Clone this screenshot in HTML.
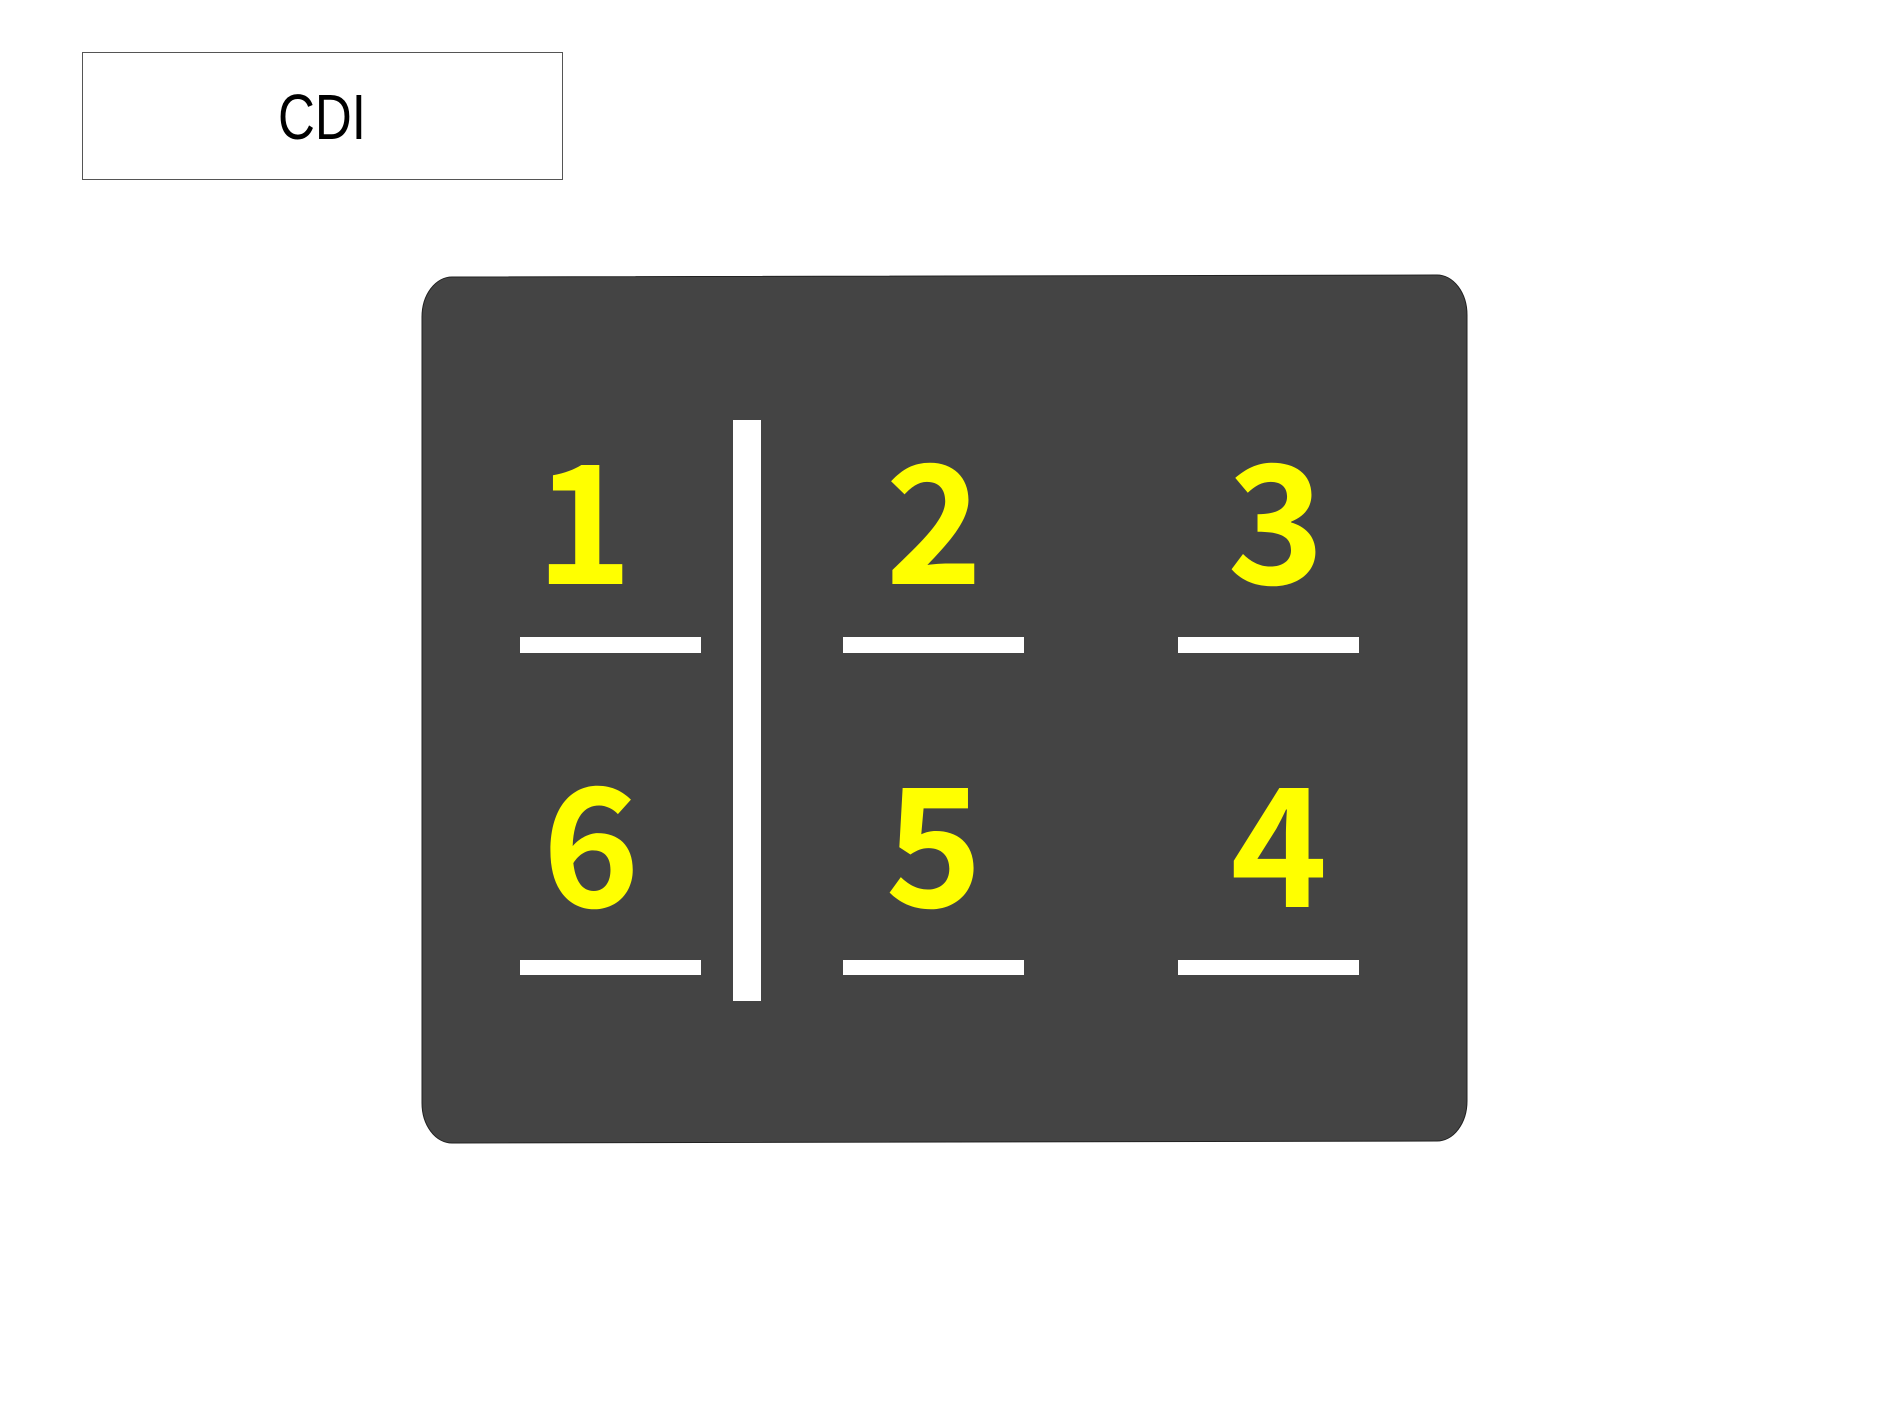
<!DOCTYPE html>
<html><head><meta charset="utf-8"><style>
html,body{margin:0;padding:0;background:#fff;width:1890px;height:1417px;overflow:hidden}
svg{display:block}
</style></head><body>
<svg width="1890" height="1417" viewBox="0 0 1890 1417" xmlns="http://www.w3.org/2000/svg">
<rect x="82.5" y="52.5" width="480" height="127" fill="#fff" stroke="#555" stroke-width="1"/>
<text x="322" y="139" font-family="Liberation Sans Narrow, Liberation Sans, sans-serif" font-size="64" text-anchor="middle" textLength="88" lengthAdjust="spacingAndGlyphs" fill="#000">CDI</text>
<path d="M452 277 L1437 275 A30 40 0 0 1 1467 315 L1467 1101 A30 40 0 0 1 1437 1141 L452 1143 A30 40 0 0 1 422 1103 L422 317 A30 40 0 0 1 452 277 Z" fill="#444" stroke="#222" stroke-width="1"/>
<rect x="733" y="420" width="28" height="581" fill="#fff"/>
<g fill="#fff">
<rect x="520" y="637" width="181" height="16"/>
<rect x="843" y="637" width="181" height="16"/>
<rect x="1178" y="637" width="181" height="16"/>
<rect x="520" y="960" width="181" height="15"/>
<rect x="843" y="960" width="181" height="15"/>
<rect x="1178" y="960" width="181" height="15"/>
</g>
<g fill="#ffff00" font-family="Noto Sans CJK JP, Liberation Sans, sans-serif" font-weight="bold" font-size="165" text-anchor="middle">
<text x="584" y="584">1</text>
<text x="934" y="584">2</text>
<text x="1276" y="584">3</text>
<text x="591" y="907">6</text>
<text x="934" y="907">5</text>
<text x="1279" y="907">4</text>
</g>
</svg>
</body></html>
